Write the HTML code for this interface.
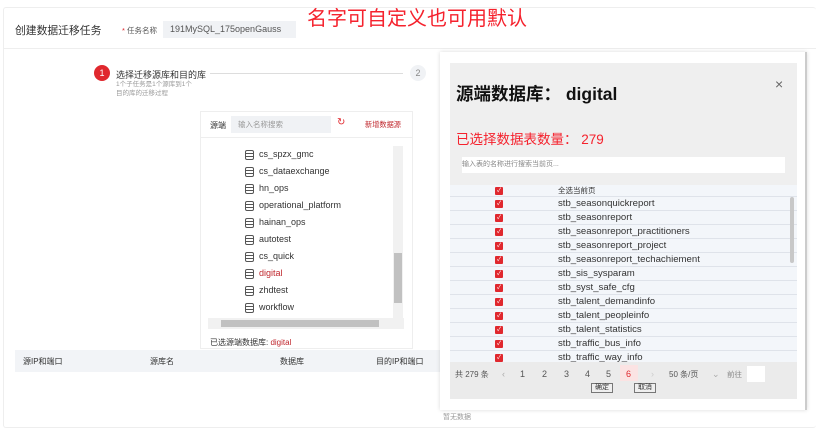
<!DOCTYPE html>
<html><head><meta charset="utf-8"><style>
*{margin:0;padding:0;box-sizing:border-box}
body{width:816px;height:428px;overflow:hidden;background:#fff;font-family:"Liberation Sans","Noto Sans CJK SC",sans-serif;position:relative;color:#333}
.a{position:absolute;white-space:nowrap}
.db{position:absolute;left:245px;width:9px;height:10px;border:1.2px solid #555;border-radius:2px}
.db:before,.db:after{content:"";position:absolute;left:0;right:0;height:1px;background:#555}
.db:before{top:2px}.db:after{top:5px}
.it{position:absolute;left:259px;font-size:9px;color:#333}
.row{position:absolute;left:450px;width:347px;height:14px;border-bottom:1px solid #dfe3ea;background:#f3f6fa}
.cb{position:absolute;left:45px;top:3px;width:8px;height:8px;background:#e0282e;border-radius:1px;color:#fff;font-size:6px;line-height:8px;text-align:center}
.rt{position:absolute;left:108px;top:0;font-size:9.6px;line-height:14px;color:#333}
.pg{position:absolute;top:369px;font-size:9px;color:#555}
</style></head><body>
<div class="a" style="left:3px;top:7px;width:813px;height:421px;border:1px solid #eee;border-right:none;border-radius:3px"></div>
<div class="a" style="left:4px;top:48px;width:812px;height:1px;background:#eee"></div>
<div class="a" style="left:15px;top:22px;font-size:10.8px;color:#333">创建数据迁移任务</div>
<div class="a" style="left:122px;top:25px;font-size:7.5px;color:#555"><span style="color:#e0282e">*</span> 任务名称</div>
<div class="a" style="left:163px;top:21px;width:133px;height:17px;background:#f0f2f5;font-size:9px;line-height:17px;padding-left:7px;color:#555">191MySQL_175openGauss</div>
<div class="a" style="left:307px;top:6px;font-size:20px;color:#f5222d;line-height:26px">名字可自定义也可用默认</div>

<div class="a" style="left:94px;top:65px;width:16px;height:16px;border-radius:50%;background:#e0282e;color:#fff;font-size:9px;line-height:16px;text-align:center">1</div>
<div class="a" style="left:116px;top:68px;font-size:9px;color:#333">选择迁移源库和目的库</div>
<div class="a" style="left:210px;top:73px;width:193px;height:1px;background:#ddd"></div>
<div class="a" style="left:410px;top:65px;width:16px;height:16px;border-radius:50%;background:#f0f2f5;color:#888;font-size:9px;line-height:16px;text-align:center">2</div>
<div class="a" style="left:116px;top:80px;font-size:6.5px;color:#999;line-height:9px">1个子任务是1个源库到1个<br>目的库的迁移过程</div>

<div class="a" style="left:200px;top:111px;width:213px;height:238px;border:1px solid #eee;background:#fff"></div>
<div class="a" style="left:201px;top:137px;width:211px;height:1px;background:#eee"></div>
<div class="a" style="left:210px;top:120px;font-size:8px;color:#333">源端</div>
<div class="a" style="left:231px;top:116px;width:100px;height:17px;background:#f0f2f5;font-size:7.5px;line-height:17px;padding-left:7px;color:#999">输入名称搜索</div>
<div class="a" style="left:337px;top:117px;font-size:10px;color:#e0282e">↻</div>
<div class="a" style="left:365px;top:120px;font-size:7.2px;color:#c0282e">新增数据源</div>
<div class="db" style="top:150px"></div><div class="it" style="top:149px">cs_spzx_gmc</div>
<div class="db" style="top:167px"></div><div class="it" style="top:166px">cs_dataexchange</div>
<div class="db" style="top:184px"></div><div class="it" style="top:183px">hn_ops</div>
<div class="db" style="top:201px"></div><div class="it" style="top:200px">operational_platform</div>
<div class="db" style="top:218px"></div><div class="it" style="top:217px">hainan_ops</div>
<div class="db" style="top:235px"></div><div class="it" style="top:234px">autotest</div>
<div class="db" style="top:252px"></div><div class="it" style="top:251px">cs_quick</div>
<div class="db" style="top:269px"></div><div class="it" style="top:268px;color:#c0282e">digital</div>
<div class="db" style="top:286px"></div><div class="it" style="top:285px">zhdtest</div>
<div class="db" style="top:303px"></div><div class="it" style="top:302px">workflow</div>
<div class="a" style="left:393px;top:146px;width:10px;height:172px;background:#f1f1f1"></div>
<div class="a" style="left:394px;top:253px;width:8px;height:50px;background:#c1c1c1"></div>
<div class="a" style="left:208px;top:318px;width:196px;height:11px;background:#f1f1f1"></div>
<div class="a" style="left:221px;top:320px;width:158px;height:7px;background:#c1c1c1"></div>
<div class="a" style="left:210px;top:337px;font-size:8px;color:#333">已选源端数据库: <span style="color:#c0282e">digital</span></div>

<div class="a" style="left:15px;top:350px;width:425px;height:22px;background:#f2f4f7"></div>
<div class="a" style="left:23px;top:356px;font-size:8px;color:#333">源IP和端口</div>
<div class="a" style="left:150px;top:356px;font-size:8px;color:#333">源库名</div>
<div class="a" style="left:280px;top:356px;font-size:8px;color:#333">数据库</div>
<div class="a" style="left:376px;top:356px;font-size:8px;color:#333">目的IP和端口</div>
<div class="a" style="left:443px;top:412px;font-size:7px;color:#999">暂无数据</div>

<div class="a" style="left:440px;top:52px;width:367px;height:358px;background:#fff;border-right:2px solid #ccc;box-shadow:0 0 4px rgba(0,0,0,.15)"></div>
<div class="a" style="left:450px;top:63px;width:347px;height:336px;background:#efefef"></div>
<div class="a" style="left:456px;top:81px;font-size:17.5px;font-weight:bold;color:#111">源端数据库： digital</div>
<div class="a" style="left:775px;top:76px;font-size:14px;color:#666">×</div>
<div class="a" style="left:456px;top:128px;font-size:13.5px;color:#f5222d">已选择数据表数量： 279</div>
<div class="a" style="left:462px;top:157px;width:323px;height:16px;background:#fff;font-size:7px;line-height:16px;color:#888"> 输入表的名称进行搜索当前页...</div>
<div class="a" style="left:450px;top:185px;width:347px;height:178px;background:#f3f6fa;border-top:1px solid #e6e6e6"></div>
<div class="row" style="top:185px;height:12px"><div class="cb" style="top:2px">✓</div><div class="rt" style="font-size:7.5px;line-height:12px">全选当前页</div></div>
<div class="row" style="top:197px"><div class="cb">✓</div><div class="rt">stb_seasonquickreport</div></div>
<div class="row" style="top:211px"><div class="cb">✓</div><div class="rt">stb_seasonreport</div></div>
<div class="row" style="top:225px"><div class="cb">✓</div><div class="rt">stb_seasonreport_practitioners</div></div>
<div class="row" style="top:239px"><div class="cb">✓</div><div class="rt">stb_seasonreport_project</div></div>
<div class="row" style="top:253px"><div class="cb">✓</div><div class="rt">stb_seasonreport_techachiement</div></div>
<div class="row" style="top:267px"><div class="cb">✓</div><div class="rt">stb_sis_sysparam</div></div>
<div class="row" style="top:281px"><div class="cb">✓</div><div class="rt">stb_syst_safe_cfg</div></div>
<div class="row" style="top:295px"><div class="cb">✓</div><div class="rt">stb_talent_demandinfo</div></div>
<div class="row" style="top:309px"><div class="cb">✓</div><div class="rt">stb_talent_peopleinfo</div></div>
<div class="row" style="top:323px"><div class="cb">✓</div><div class="rt">stb_talent_statistics</div></div>
<div class="row" style="top:337px"><div class="cb">✓</div><div class="rt">stb_traffic_bus_info</div></div>
<div class="row" style="top:351px;height:12px;overflow:hidden"><div class="cb">✓</div><div class="rt">stb_traffic_way_info</div></div>
<div class="a" style="left:790px;top:197px;width:4px;height:66px;background:#c8c8c8;border-radius:2px"></div>
<div class="a" style="left:450px;top:362px;width:347px;height:37px;background:#ebebeb"></div>
<div class="pg" style="left:455px;font-size:8px">共 279 条</div>
<div class="pg" style="left:502px;color:#aaa">‹</div>
<div class="pg" style="left:520px">1</div><div class="pg" style="left:542px">2</div><div class="pg" style="left:564px">3</div><div class="pg" style="left:585px">4</div><div class="pg" style="left:606px">5</div>
<div class="a" style="left:620px;top:365px;width:18px;height:16px;background:#fbe3e3"></div>
<div class="pg" style="left:626px;color:#e0282e">6</div>
<div class="pg" style="left:651px;color:#ccc">›</div>
<div class="pg" style="left:669px;font-size:8px">50 条/页</div>
<div class="pg" style="left:712px;color:#aaa">⌄</div>
<div class="pg" style="left:727px;font-size:7.5px;color:#888">前往</div>
<div class="a" style="left:747px;top:366px;width:18px;height:16px;background:#fff"></div>
<div class="a" style="left:591px;top:383px;width:22px;height:10px;border:1px solid #777;background:#efefef;font-size:7px;line-height:8px;text-align:center">确定</div>
<div class="a" style="left:634px;top:383px;width:22px;height:10px;border:1px solid #777;background:#efefef;font-size:7px;line-height:8px;text-align:center">取消</div>
</body></html>
